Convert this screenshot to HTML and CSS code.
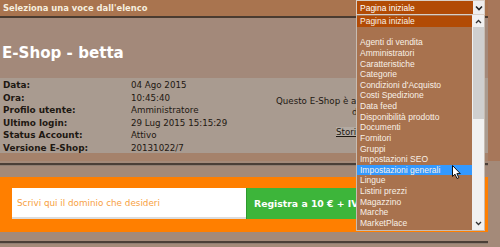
FILE: index.html
```html
<!DOCTYPE html>
<html lang="it">

<head>
    <meta charset="UTF-8">
    <meta name="viewport" content="width=device-width, initial-scale=1.0">
    <title>E-Shop - betta</title>
    <link rel="stylesheet" href="styles.css">
</head>

<body>
    <div class="upper">
        <div class="main">
            <div class="topbar">Seleziona una voce dall'elenco</div>
            <div class="head">
                <h1 class="shop_title">E-Shop - betta</h1>
            </div>
            <div class="info">
                <table class="stats">
                    <tr><td class="stat_label">Data:</td><td>04 Ago 2015</td></tr>
                    <tr><td class="stat_label">Ora:</td><td>10:45:40</td></tr>
                    <tr><td class="stat_label">Profilo utente:</td><td>Amministratore</td></tr>
                    <tr><td class="stat_label">Ultimo login:</td><td>29 Lug 2015 15:15:29</td></tr>
                    <tr><td class="stat_label">Status Account:</td><td>Attivo</td></tr>
                    <tr><td class="stat_label">Versione E-Shop:</td><td>20131022/7</td></tr>
                </table>
                <div class="notice">
                    <p class="notice_line">Questo E-Shop è attivo</p>
                    <p class="notice_line notice_second">dal</p>
                    <p class="notice_line notice_third"><a class="notice_link" href="#">Storico</a></p>
                </div>
            </div>
            <div class="band"></div>
        </div>
    </div>
    <div class="lower">
        <div class="rule"></div>
        <div class="promo">
            <div class="domain_input">Scrivi qui il dominio che desideri</div>
            <div class="register_btn">Registra a 10 € + IVA</div>
        </div>
        <div class="rule rule_bottom"></div>
    </div>

    <div class="picker">
        <div class="picker_select">
            <span>Pagina iniziale</span>
            <span class="picker_arrow">
                <svg width="8" height="6" viewBox="0 0 8 6"><path d="M1 1.5 L4 4.5 L7 1.5" fill="none" stroke="#222" stroke-width="1.6"/></svg>
            </span>
        </div>
        <div class="picker_list">
            <div class="picker_items">
                <div class="picker_item picker_selected">Pagina iniziale</div>
                <div class="picker_item"></div>
                <div class="picker_item">Agenti di vendita</div>
                <div class="picker_item">Amministratori</div>
                <div class="picker_item">Caratteristiche</div>
                <div class="picker_item">Categorie</div>
                <div class="picker_item">Condizioni d'Acquisto</div>
                <div class="picker_item">Costi Spedizione</div>
                <div class="picker_item">Data feed</div>
                <div class="picker_item">Disponibilità prodotto</div>
                <div class="picker_item">Documenti</div>
                <div class="picker_item">Fornitori</div>
                <div class="picker_item">Gruppi</div>
                <div class="picker_item">Impostazioni SEO</div>
                <div class="picker_item picker_hover">Impostazioni generali</div>
                <div class="picker_item">Lingue</div>
                <div class="picker_item">Listini prezzi</div>
                <div class="picker_item">Magazzino</div>
                <div class="picker_item">Marche</div>
                <div class="picker_item">MarketPlace</div>
            </div>
            <div class="scrollbar">
                <svg class="scroll_up" width="7" height="5" viewBox="0 0 7 5"><path d="M1 4 L3.5 1.5 L6 4" fill="none" stroke="#333" stroke-width="1.3"/></svg>
                <div class="scroll_thumb"></div>
                <svg class="scroll_down" width="7" height="5" viewBox="0 0 7 5"><path d="M1 1 L3.5 3.5 L6 1" fill="none" stroke="#333" stroke-width="1.3"/></svg>
            </div>
        </div>
        <svg class="cursor" width="10" height="15" viewBox="0 0 10 15"><path d="M0.5 0.5 L0.5 11.5 L3 9.2 L5 13.5 L6.8 12.7 L4.9 8.6 L8.3 8.6 Z" fill="#fff" stroke="#111" stroke-width="1"/></svg>
    </div>
</body>

</html>
```

FILE: styles.css
```css
body {
    margin: 0;
    background-color: #a48a79;
    font-family: "DejaVu Sans", Verdana, sans-serif;
    font-size: 8.7px;
    color: #1e1812;
    width: 500px;
    height: 247px;
    overflow: hidden;
}

.upper {
    background-color: #a7775a;
}

.main {
    width: 488px;
}

.topbar {
    height: 16px;
    line-height: 16px;
    padding-left: 3px;
    background-color: #a9744f;
    border-bottom: 2px solid #4a3b30;
    color: #f6eedf;
    font-weight: bold;
    font-size: 8.4px;
}

.head {
    height: 60px;
    background-color: #a3897a;
    display: flex;
    align-items: flex-end;
}

.shop_title {
    margin: 0 0 16px 2px;
    font-size: 15.1px;
    color: #ffffff;
    line-height: 18px;
}

.info {
    height: 75px;
    background-color: #a99b90;
    display: flex;
    box-sizing: border-box;
    padding-top: 1px;
}

.stats {
    border-collapse: collapse;
    width: 273px;
}

.stats td {
    padding: 0;
    height: 12.6px;
    line-height: 12.6px;
    vertical-align: middle;
}

.stats .stat_label {
    width: 128px;
    padding-left: 3px;
    font-size: 8.9px;
    font-weight: bold;
}

/* la colonna finisce sotto il menu a tendina */
.notice {
    width: 83px;
    padding-top: 17px;
}

.notice_line {
    margin: 0;
    padding-left: 3px;
    line-height: 11px;
    white-space: nowrap;
    overflow: hidden;
}

.notice_second {
    padding-left: 79px;
}

.notice_third {
    margin-top: 9px;
    padding-left: 63px;
}

.notice_link {
    color: #1e1812;
    background-color: #b3aaa2;
}

.band {
    height: 8px;
    background-color: #a5826b;
}

.lower {
    width: 488px;
    padding-top: 2px;
}

.rule {
    height: 2px;
    background-color: #4b3f37;
    border-bottom: 1px solid #8f7e72;
}

.rule_bottom {
    margin-top: 9px;
}

.promo {
    margin-top: 11px;
    height: 55px;
    box-sizing: border-box;
    padding: 11px 0 0 12px;
    background-color: #ff7f00;
    display: flex;
    overflow: hidden;
}

.domain_input {
    width: 234px;
    height: 31px;
    box-sizing: border-box;
    padding-left: 5px;
    line-height: 31px;
    background-color: #ffffff;
    border-bottom: 2px solid #dcdcdc;
    color: #f7a13f;
    font-size: 8.8px;
}

.register_btn {
    width: 200px;
    height: 31px;
    box-sizing: border-box;
    padding-left: 7px;
    line-height: 31px;
    background-color: #3db53a;
    border-left: 1px solid #2e9a2e;
    color: #ffffff;
    font-weight: bold;
    font-size: 9.3px;
}

.picker {
    position: absolute;
    left: 356px;
    top: 0;
    width: 129px;
    font-family: "Liberation Sans", Arial, sans-serif;
    font-size: 8.5px;
}

.picker_select {
    height: 15px;
    box-sizing: border-box;
    border: 1px solid #d9cfc6;
    background-color: #b24b05;
    color: #ffffff;
    display: flex;
    align-items: center;
    justify-content: space-between;
    padding-left: 3px;
}

.picker_arrow {
    width: 11px;
    height: 13px;
    background-color: #eeeeee;
    display: flex;
    align-items: center;
    justify-content: center;
}

.picker_list {
    height: 216px;
    box-sizing: border-box;
    border: 1px solid #c7bcb2;
    border-top: none;
    background-color: #a8724e;
    display: flex;
}

.picker_items {
    flex: 1;
    padding-top: 1px;
}

.picker_item {
    height: 10.64px;
    line-height: 10.64px;
    padding-left: 3px;
    color: #f8f0e6;
    white-space: nowrap;
}

.picker_selected {
    background-color: #b24b05;
}

.picker_hover {
    background-color: #3399ff;
}

.scrollbar {
    width: 12px;
    background-color: #f1f1f1;
    display: flex;
    flex-direction: column;
    align-items: center;
}

.scroll_up {
    margin-top: 4px;
}

.scroll_thumb {
    margin-top: 3px;
    width: 11px;
    height: 92px;
    background-color: #cfcfcf;
}

.scroll_down {
    margin-top: auto;
    margin-bottom: 4px;
}

.cursor {
    position: absolute;
    left: 96px;
    top: 165px;
}
```
